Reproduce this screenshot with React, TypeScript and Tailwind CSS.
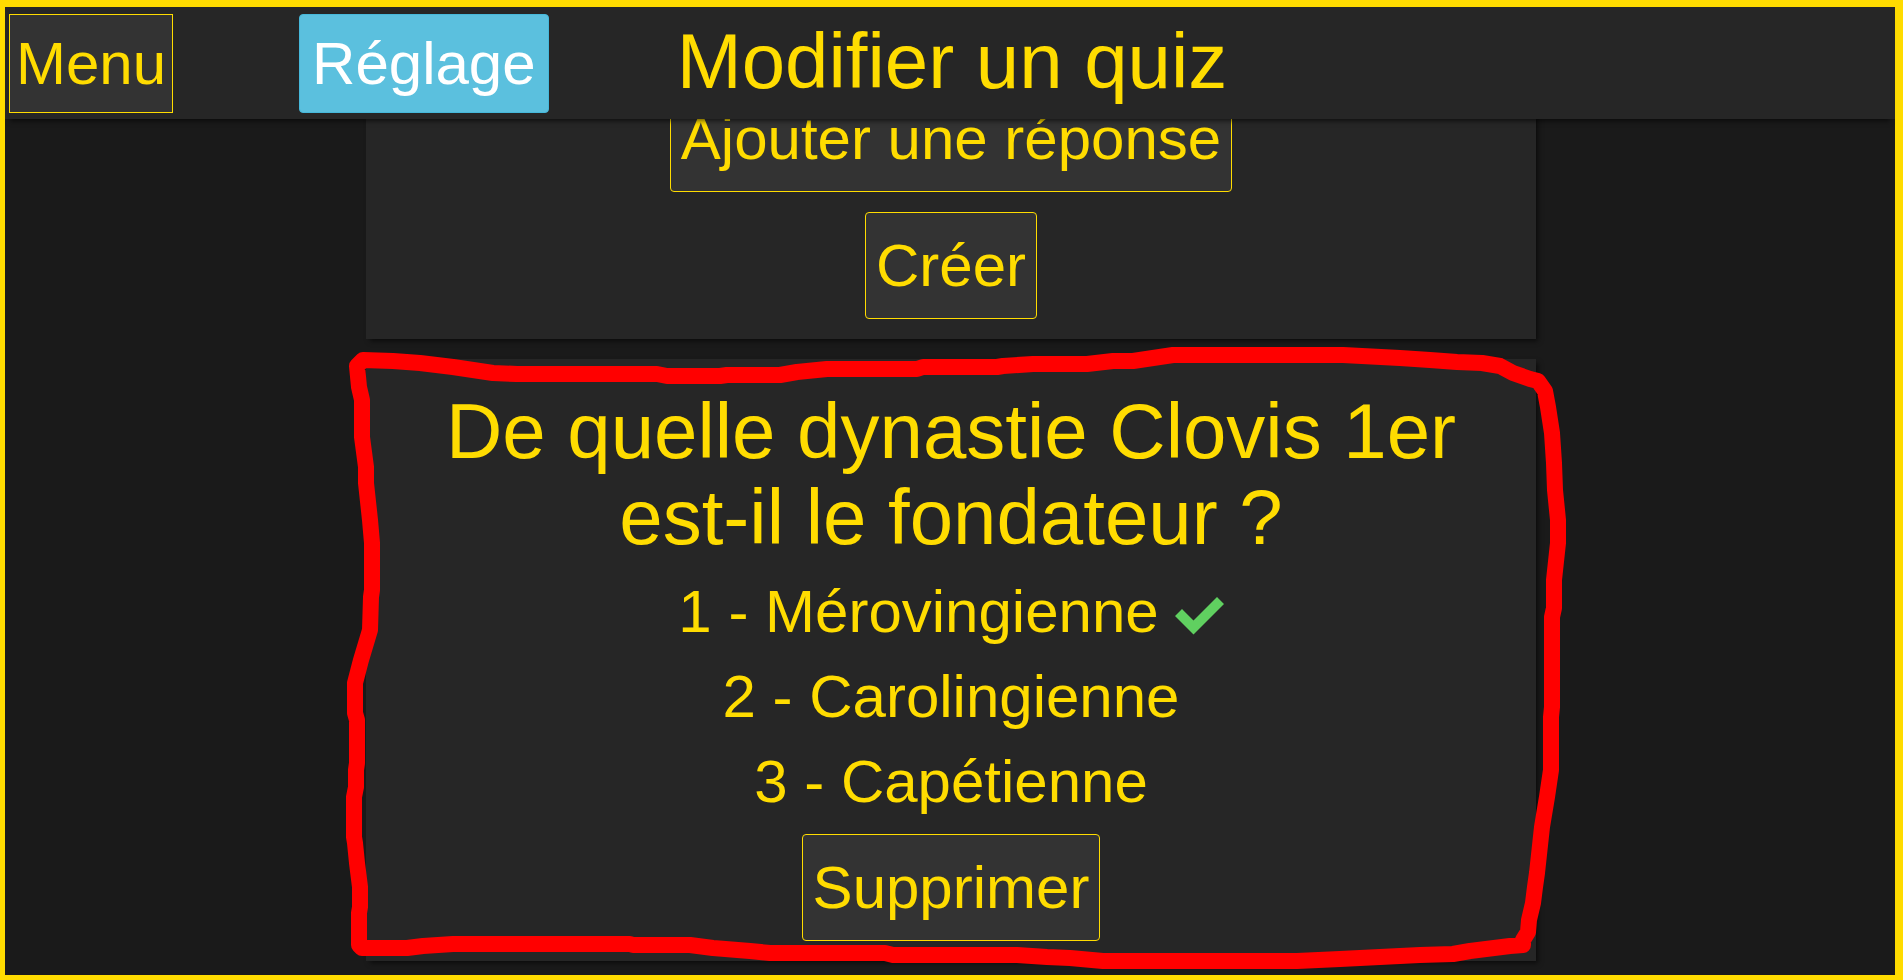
import type { ButtonHTMLAttributes } from "react";

const answers = [
  { label: "1 - Mérovingienne", correct: true },
  { label: "2 - Carolingienne", correct: false },
  { label: "3 - Capétienne", correct: false },
];

const card =
  "flex w-full max-w-[1170px] flex-col items-center bg-[#262626] py-5 shadow-[3px_3px_5px_-1px_rgba(0,0,0,0.6)]";

function ActionButton(props: ButtonHTMLAttributes<HTMLButtonElement>) {
  return (
    <button
      type="button"
      className="rounded border border-[#ffdc00] bg-[#333] px-2.5 py-2.5 leading-[85px]"
      {...props}
    />
  );
}

function Check() {
  return (
    <svg role="img" aria-label="Bonne réponse" viewBox="0 0 49 46" className="h-[46px] w-[49px]">
      <path d="M0 27 L7 20 L18.500 31.500 L42 8 L49 15 L18.500 45.500 Z" fill="#60d060" />
    </svg>
  );
}

function HandDrawnFrame() {
  return (
    <svg
      aria-hidden="true"
      viewBox="340 340 1240 640"
      className="pointer-events-none absolute -top-[19px] -left-[26px] h-[640px] w-[1240px] max-w-none"
    >
      <path
        d="M363 360 L393 361 L420 363 L453 367 L493 373 L517 374 L657 374 L667 376 L720 376 L727 375 L780 375 L797 372 L827 369 L917 369 L923 367 L997 367 L1003 366 L1033 364 L1087 364 L1113 361 L1133 361 L1153 358 L1173 355 L1343 355 L1400 358 L1430 360 L1457 362 L1482 363 L1500 366 L1513 373 L1530 379 L1538 381 L1545 391 L1548 407 L1552 433 L1554 463 L1555 490 L1558 520 L1558 543 L1554 580 L1554 608 L1552 617 L1552 707 L1551 717 L1551 770 L1547 797 L1542 827 L1537 873 L1535 887 L1533 903 L1529 920 L1528 932 L1523 940 L1523 945 L1510 946 L1470 951 L1453 954 L1420 955 L1380 957 L1340 959 L1297 961 L1103 961 L1070 958 L1047 957 L1017 955 L893 955 L885 953 L770 953 L750 951 L713 948 L690 945 L633 945 L630 944 L453 944 L423 946 L407 948 L362 948 L359 945 L359 913 L360 907 L360 887 L357 863 L355 843 L354 837 L354 797 L356 787 L356 770 L357 763 L357 720 L355 713 L355 683 L361 660 L367 640 L370 630 L371 597 L372 590 L372 543 L370 520 L366 483 L366 467 L362 437 L362 400 L359 387 L357 366 L363 360"
        fill="none"
        stroke="#f00"
        strokeWidth="16"
        strokeLinecap="round"
        strokeLinejoin="round"
      />
    </svg>
  );
}

export default function App() {
  return (
    <div className="flex min-h-screen flex-col border-t-[7px] border-r-8 border-b-[5px] border-l-[5px] border-[#ffdc00] bg-[#1a1a1a] font-['Liberation_Sans',Arial,sans-serif] text-[60px] text-[#ffdc00]">
      <header className="relative z-10 flex items-start bg-[#262626] pt-[7px] pb-1.5 pl-1 shadow-[0_7px_5px_-5px_rgba(0,0,0,0.6)]">
        <div className="flex flex-1 gap-[126px]">
          <button type="button" className="border border-[#ffdc00] bg-[#333] p-1.5 leading-[85px]">
            Menu
          </button>
          <button
            type="button"
            className="rounded border border-[#46b8da] bg-[#5bc0de] px-3 py-1.5 leading-[85px] text-white"
          >
            Réglage
          </button>
        </div>
        <h1 className="mt-1 text-[78px] leading-[86px]">Modifier un quiz</h1>
        <div className="flex-1" />
      </header>

      <main className="flex flex-1 flex-col items-center gap-5 overflow-hidden pb-3.5 pl-0.5">
        <section className={`${card} -mt-[54px] gap-5`}>
          <ActionButton>Ajouter une réponse</ActionButton>
          <ActionButton>Créer</ActionButton>
        </section>

        <section className={`${card} relative`}>
          <h2 className="my-[9px] px-5 text-center text-[78px] leading-[86px]">
            De quelle dynastie Clovis 1er
            <br />
            est-il le fondateur ?
          </h2>
          <ul className="mb-2.5 leading-[85px]">
            {answers.map((answer) => (
              <li key={answer.label} className="flex items-center justify-center gap-4">
                {answer.label}
                {answer.correct && <Check />}
              </li>
            ))}
          </ul>
          <ActionButton>Supprimer</ActionButton>
          <HandDrawnFrame />
        </section>
      </main>
    </div>
  );
}
